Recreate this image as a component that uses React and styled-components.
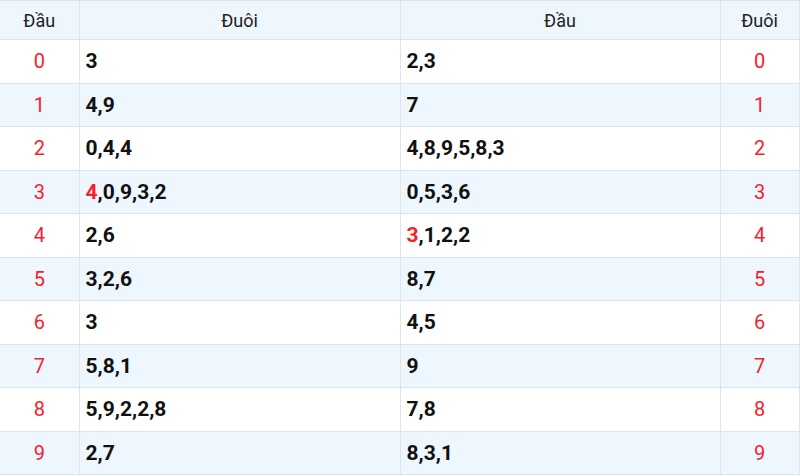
import React from "react";
import styled, { createGlobalStyle } from "styled-components";

const GlobalStyle = createGlobalStyle`
    html, body {
        margin: 0;
        padding: 0;
        background: #ffffff;
        font-family: Roboto, "Liberation Sans", sans-serif;
    }
`;

const Table = styled.table`
    width: 799px;
    border-collapse: collapse;
    table-layout: fixed;
    border-top: 1px solid #dfe4ea;
    border-bottom: 1px solid #dfe4ea;
    border-right: 1px solid #dfe4ea;
`;

const HeadCell = styled.th`
    height: 38px;
    padding: 0;
    background: #eef6fe;
    color: #222;
    font-size: 18px;
    font-weight: 400;
    text-align: center;
    border-left: ${(p) => (p.$first ? "none" : "1px solid #dfe4ea")};
    border-bottom: 1px solid #dfe4ea;
`;

const Row = styled.tr`
    background: ${(p) => (p.$alt ? "#eef6fe" : "#ffffff")};
`;

const NumCell = styled.td`
    height: 42.5px;
    padding: 0;
    text-align: center;
    color: #f5222d;
    font-size: 20px;
    border-left: ${(p) => (p.$first ? "none" : "1px solid #dfe4ea")};
    border-bottom: 1px solid #dfe4ea;
`;

const ValueCell = styled.td`
    padding: 0 0 0 6px;
    color: #111;
    font-size: 21px;
    font-weight: 700;
    border-left: 1px solid #dfe4ea;
    border-bottom: 1px solid #dfe4ea;
`;

const Hot = styled.span`
    color: #f5222d;
`;

const rows = [
    ["3", "2,3"],
    ["4,9", "7"],
    ["0,4,4", "4,8,9,5,8,3"],
    [["4", ",0,9,3,2"], "0,5,3,6"],
    ["2,6", ["3", ",1,2,2"]],
    ["3,2,6", "8,7"],
    ["3", "4,5"],
    ["5,8,1", "9"],
    ["5,9,2,2,8", "7,8"],
    ["2,7", "8,3,1"],
];

const Value = ({ v }) =>
    Array.isArray(v) ? (
        <>
            <Hot>{v[0]}</Hot>
            {v[1]}
        </>
    ) : (
        v
    );

const App = () => (
    <>
        <GlobalStyle />
        <Table>
            <colgroup>
                <col style={{ width: 79 }} />
                <col style={{ width: 321 }} />
                <col style={{ width: 320 }} />
                <col style={{ width: 79 }} />
            </colgroup>
            <thead>
                <tr>
                    <HeadCell $first>Đầu</HeadCell>
                    <HeadCell>Đuôi</HeadCell>
                    <HeadCell>Đầu</HeadCell>
                    <HeadCell>Đuôi</HeadCell>
                </tr>
            </thead>
            <tbody>
                {rows.map((r, i) => (
                    <Row key={i} $alt={i % 2 === 1}>
                        <NumCell $first>{i}</NumCell>
                        <ValueCell>
                            <Value v={r[0]} />
                        </ValueCell>
                        <ValueCell>
                            <Value v={r[1]} />
                        </ValueCell>
                        <NumCell>{i}</NumCell>
                    </Row>
                ))}
            </tbody>
        </Table>
    </>
);

export default App;
